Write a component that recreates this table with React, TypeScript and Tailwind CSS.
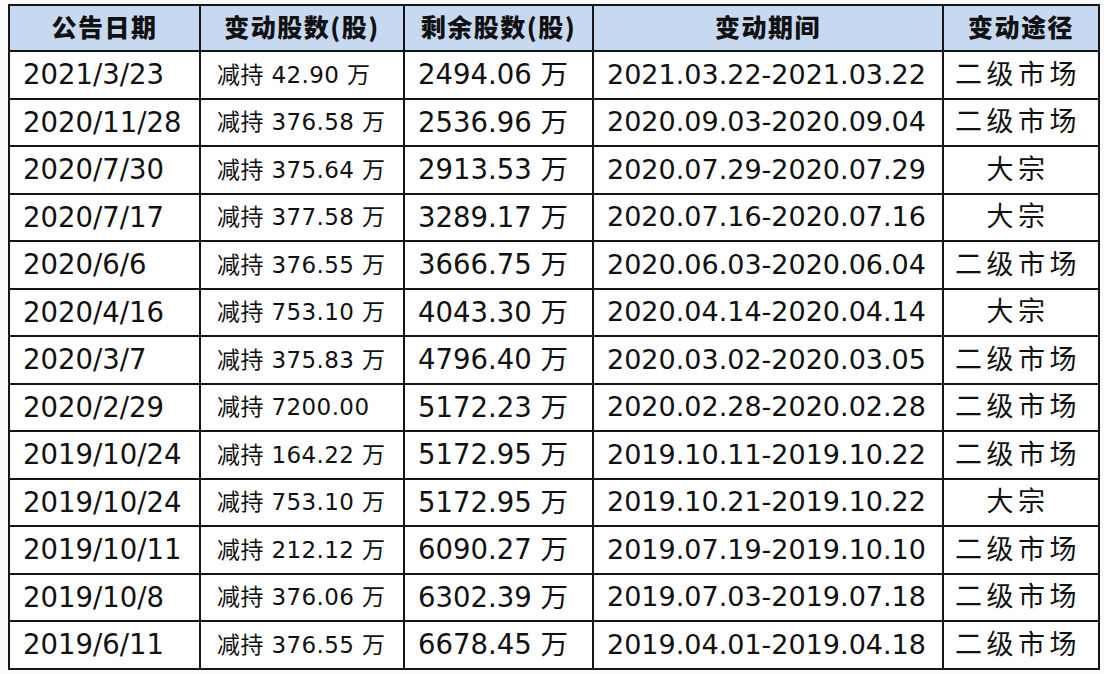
import React from 'react';

const rows = [
  { date: '2021/3/23', change: '42.90 万', left: '2494.06 万', period: '2021.03.22-2021.03.22', way: '二级市场' },
  { date: '2020/11/28', change: '376.58 万', left: '2536.96 万', period: '2020.09.03-2020.09.04', way: '二级市场' },
  { date: '2020/7/30', change: '375.64 万', left: '2913.53 万', period: '2020.07.29-2020.07.29', way: '大宗' },
  { date: '2020/7/17', change: '377.58 万', left: '3289.17 万', period: '2020.07.16-2020.07.16', way: '大宗' },
  { date: '2020/6/6', change: '376.55 万', left: '3666.75 万', period: '2020.06.03-2020.06.04', way: '二级市场' },
  { date: '2020/4/16', change: '753.10 万', left: '4043.30 万', period: '2020.04.14-2020.04.14', way: '大宗' },
  { date: '2020/3/7', change: '375.83 万', left: '4796.40 万', period: '2020.03.02-2020.03.05', way: '二级市场' },
  { date: '2020/2/29', change: '7200.00', left: '5172.23 万', period: '2020.02.28-2020.02.28', way: '二级市场' },
  { date: '2019/10/24', change: '164.22 万', left: '5172.95 万', period: '2019.10.11-2019.10.22', way: '二级市场' },
  { date: '2019/10/24', change: '753.10 万', left: '5172.95 万', period: '2019.10.21-2019.10.22', way: '大宗' },
  { date: '2019/10/11', change: '212.12 万', left: '6090.27 万', period: '2019.07.19-2019.10.10', way: '二级市场' },
  { date: '2019/10/8', change: '376.06 万', left: '6302.39 万', period: '2019.07.03-2019.07.18', way: '二级市场' },
  { date: '2019/6/11', change: '376.55 万', left: '6678.45 万', period: '2019.04.01-2019.04.18', way: '二级市场' },
];

const headers = ['公告日期', '变动股数(股)', '剩余股数(股)', '变动期间', '变动途径'];

const App = () => {
  return (
    <div
      className="w-[1104px] h-[674px] bg-[#fbfbfb] pt-[4px] pl-[8px]"
      style={{ fontFamily: '"DejaVu Sans", "Noto Sans CJK SC", sans-serif' }}
    >
      <table className="border-collapse border-2 border-[#151515] text-[#111] table-fixed w-[1090px]">
        <colgroup>
          <col className="w-[191px]" />
          <col className="w-[204px]" />
          <col className="w-[189px]" />
          <col className="w-[350px]" />
          <col className="w-[156px]" />
        </colgroup>
        <thead>
          <tr className="h-[46px] bg-[#c6d9f0]">
            {headers.map((h) => (
              <th
                key={h}
                className="border-2 border-[#151515] text-[25px] font-black text-center p-0 pb-[3px] tracking-[1.5px]"
                style={{ fontFamily: '"Noto Sans CJK SC", "DejaVu Sans", sans-serif' }}
              >
                {h}
              </th>
            ))}
          </tr>
        </thead>
        <tbody className="bg-white">
          {rows.map((r, i) => (
            <tr key={i} className="h-[47.5px]">
              <td className="border-2 border-[#151515] text-[27.5px] pl-[13px] p-0 whitespace-nowrap">{r.date}</td>
              <td className="border-2 border-[#151515] text-[23px] pl-[16px] p-0 whitespace-nowrap tracking-[0.4px]">
                减持 {r.change}
              </td>
              <td className="border-2 border-[#151515] text-[27.5px] pl-[13px] p-0 whitespace-nowrap">{r.left}</td>
              <td className="border-2 border-[#151515] text-[27px] pl-[13px] p-0 whitespace-nowrap">{r.period}</td>
              <td className="border-2 border-[#151515] text-[27px] text-center p-0 pr-[6px] whitespace-nowrap tracking-[4.5px]">
                {r.way}
              </td>
            </tr>
          ))}
        </tbody>
      </table>
    </div>
  );
};

export default App;
